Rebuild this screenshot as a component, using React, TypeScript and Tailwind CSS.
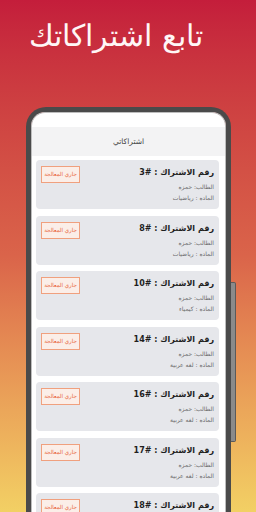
const SUBS = [
  { id: 3, student: "حمزه", subject: "رياضيات" },
  { id: 8, student: "حمزه", subject: "رياضيات" },
  { id: 10, student: "حمزه", subject: "كيمياء" },
  { id: 14, student: "حمزه", subject: "لغه عربية" },
  { id: 16, student: "حمزه", subject: "لغه عربية" },
  { id: 17, student: "حمزه", subject: "لغه عربية" },
  { id: 18, student: "حمزه", subject: "لغه عربية" },
];

function SubCard({ id, student, subject }: { id: number; student: string; subject: string }) {
  return (
    <div className="flex h-[49px] shrink-0 items-start justify-between rounded-[4px] bg-[#e6e7eb] px-[5px] pt-[6px]">
      <div dir="rtl" className="text-right">
        <div className="text-[8px] font-bold leading-[14px] text-[#1f1f1f]">
          رقم الاشتراك : <span dir="ltr">{id}#</span>
        </div>
        <div className="mt-[1px] text-[6px] leading-[11px] text-[#6b6b6b]">الطالب: {student}</div>
        <div className="text-[6px] leading-[11px] text-[#6b6b6b]">الماده : {subject}</div>
      </div>
      <div className="order-first flex h-[17px] w-[39px] items-center justify-center border border-[#f0a07e] bg-[#fbeee8] text-[5.5px] text-[#e8643a]">
        جاري المعالجة
      </div>
    </div>
  );
}

export default function App() {
  return (
    <div
      className="relative flex h-[512px] w-[256px] flex-col overflow-hidden bg-gradient-to-b from-[#c41d3b] via-[#da644a] to-[#f2d064]"
      style={{ fontFamily: '"DejaVu Sans", sans-serif' }}
    >
      <div dir="rtl" className="h-[107px] shrink-0 pr-[53px] pt-[16px] text-right text-[30px] font-extralight leading-[40px] text-[#fff6f6]">
        تابع اشتراكاتك
      </div>

      {/* phone */}
      <div className="relative ml-[26px] w-[205px] flex-1 rounded-t-[20px] border-x-[5px] border-t-[5px] border-[#4a4a4a]">
        <div className="absolute -right-[10px] top-[170px] h-[160px] w-[5px] rounded-r-[2px] border-y border-r border-[#5a5a5a] bg-[#8a8a8a]" />
        <div className="flex h-full flex-col rounded-t-[14px] border-x border-t border-[#bdbdbd] bg-white">
          <div className="h-[14px] shrink-0" />
          <div className="flex h-[29px] shrink-0 items-center justify-center bg-[#f3f3f4] text-[7.5px] text-[#444]">اشتراكاتي</div>
          <div className="flex flex-col gap-[6.5px] pl-[4px] pr-[6px] pt-[4px]">
            {SUBS.map((s) => (
              <SubCard key={s.id} {...s} />
            ))}
          </div>
        </div>
      </div>
    </div>
  );
}
